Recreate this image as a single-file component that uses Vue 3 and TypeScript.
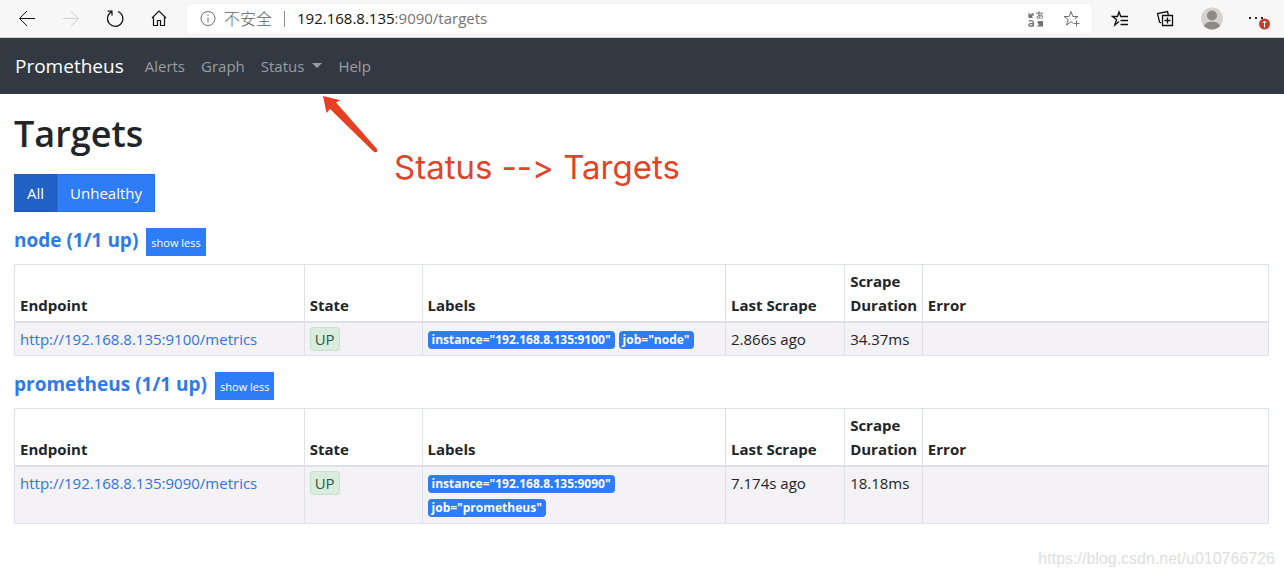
<script setup lang="ts">
interface Pool {
  name: string
  endpoint: string
  labels: string[]
  lastScrape: string
  duration: string
}

const navItems: string[] = ['Alerts', 'Graph', 'Status', 'Help']

const pools: Pool[] = [
  {
    name: 'node',
    endpoint: 'http://192.168.8.135:9100/metrics',
    labels: ['instance="192.168.8.135:9100"', 'job="node"'],
    lastScrape: '2.866s ago',
    duration: '34.37ms',
  },
  {
    name: 'prometheus',
    endpoint: 'http://192.168.8.135:9090/metrics',
    labels: ['instance="192.168.8.135:9090"', 'job="prometheus"'],
    lastScrape: '7.174s ago',
    duration: '18.18ms',
  },
]
</script>

<template>
  <div class="window">
    <header class="browser">
      <div class="controls">
        <button class="tool" type="button" aria-label="Back">
          <svg width="20" height="20" viewBox="0 0 20 20"><path d="M18 9.500H3M10 2L2.500 9.500L10 17" /></svg>
        </button>
        <button class="tool off" type="button" aria-label="Forward" disabled>
          <svg width="20" height="20" viewBox="0 0 20 20"><path d="M2 9.500h15M10 2L17.500 9.500L10 17" /></svg>
        </button>
        <button class="tool" type="button" aria-label="Refresh">
          <svg width="20" height="20" viewBox="0 0 20 20"><path d="M13 2.500a7.700 7.700 0 1 1-6.300.3M2.600 2.200H7v4.600" stroke-width="1.200" /></svg>
        </button>
        <button class="tool" type="button" aria-label="Home">
          <svg width="20" height="20" viewBox="0 0 20 20"><path d="M4.500 8.500V16.500H8.500V11.500H11.500V16.500H15.500V8.500M3 9L10 2L17 9" stroke-width="1.200" /></svg>
        </button>
      </div>
      <div class="address">
        <svg class="info" width="16" height="16" viewBox="0 0 16 16"><circle cx="8" cy="7.500" r="7" /><path d="M8 6.500v5M8 3.500v1.500" /></svg>
        <span class="unsafe">不安全</span>
        <span class="bar"></span>
        <div class="url" role="textbox" aria-label="Address" contenteditable="true" spellcheck="false">192.168.8.135<span class="path">:9090/targets</span></div>
        <button class="tool grey" type="button" aria-label="Translate">
          <svg width="18" height="18" viewBox="0 0 18 18">
            <path d="M1.500 8V2.500L3.500 4.500L6.500 2.500V6L4.500 5.500L6 8Z" fill="#707070" stroke="none" />
            <path d="M16 11v5.500H9.500L12 14.500L10 12L12 11Z" fill="#707070" stroke="none" />
            <path d="M9 3.200h7M12 1c-.4 3 0 5 .5 7M15 4.500c-1 3-3.500 4.300-4.600 3.800C9 7.500 11 5 13.500 5.200c3 .2 3 3.300.2 3.800" />
            <path d="M2 11.300c1-1 4.300-1.200 4.300.8V16.500M6.300 13.300c-2 0-4.500 0-4.500 1.700 0 1.700 3 1.900 4.500-.4" stroke-width="1.300" />
          </svg>
        </button>
        <button class="tool grey" type="button" aria-label="Add to favorites">
          <svg width="18" height="18" viewBox="0 0 18 18"><path d="M10 13L8 11.700L3.500 15L5.200 9.500L1 6.500H6.200L8 1.500L9.800 6.500H15L11.500 9M13.500 10.500v6M10.500 13.500h6" /></svg>
        </button>
      </div>
      <div class="side">
        <button class="tool" type="button" aria-label="Favorites">
          <svg width="18" height="18" viewBox="0 0 18 18"><path d="M8 11.500L3.800 15L5.500 9.500L1.500 6.500H6.500L8 2L9.800 6.500H17M9.500 10.500H17M9.500 14.500H17" stroke-width="1.300" /></svg>
        </button>
        <button class="tool" type="button" aria-label="Collections">
          <svg width="18" height="18" viewBox="0 0 18 18"><path d="M5.500 5.500H15.500V15.500H5.500ZM10.500 7.500v6M7.500 10.500h6M4 13L2.500 12L.5 3.500L10.500 1.500L11.300 5" stroke-width="1.300" /></svg>
        </button>
        <button class="tool" type="button" aria-label="Profile">
          <svg width="24" height="24" viewBox="0 0 24 24">
            <circle cx="12" cy="11.500" r="11" fill="#d5d2cf" stroke="none" />
            <circle cx="12" cy="8.500" r="5" fill="#8c8987" stroke="none" />
            <path d="M4 19.100c1.500-5.800 14.500-5.800 16 0a11 11 0 0 1-16 0z" fill="#8c8987" stroke="none" />
          </svg>
        </button>
        <button class="tool" type="button" aria-label="Settings and more">
          <svg width="24" height="24" viewBox="0 0 24 24">
            <path d="M3 10h2v2H3zM9 10h2v2H9zM15 10h2v2h-2z" fill="#222" stroke="none" />
            <circle cx="18.500" cy="17" r="5.500" fill="#c43e2f" stroke="none" />
            <path d="M18.500 20.500v-6.500M16.500 16l2-2 2 2" stroke="#fff" />
          </svg>
        </button>
      </div>
    </header>

    <nav class="navbar">
      <a class="brand" href="#">Prometheus</a>
      <a v-for="item in navItems" :key="item" class="link" href="#">{{ item }}<span v-if="item === 'Status'" class="caret"></span></a>
      <div class="note">
        <svg width="60" height="62" viewBox="0 0 60 62"><path d="M3 2L20.500 6.200L16 8.500L57 55Q58 59 54 58L10 15L6.500 19Z" fill="#e63f22" stroke="none" /></svg>
        <span class="note-text">Status --&gt; Targets</span>
      </div>
    </nav>

    <main class="content">
      <h1>Targets</h1>
      <div class="group">
        <button class="btn active" type="button">All</button>
        <button class="btn" type="button">Unhealthy</button>
      </div>

      <section v-for="pool in pools" :key="pool.name" class="pool">
        <div class="pool-head">
          <h3><a href="#">{{ pool.name }} (1/1 up)</a></h3>
          <button class="less" type="button">show less</button>
        </div>
        <table>
          <colgroup>
            <col class="c-endpoint" /><col class="c-state" /><col class="c-labels" />
            <col class="c-last" /><col class="c-duration" /><col />
          </colgroup>
          <thead>
            <tr>
              <th>Endpoint</th>
              <th>State</th>
              <th>Labels</th>
              <th>Last Scrape</th>
              <th>Scrape Duration</th>
              <th>Error</th>
            </tr>
          </thead>
          <tbody>
            <tr>
              <td><a href="#">{{ pool.endpoint }}</a></td>
              <td><span class="up">UP</span></td>
              <td>
                <div class="labels"><span v-for="label in pool.labels" :key="label" class="badge">{{ label }}</span></div>
              </td>
              <td>{{ pool.lastScrape }}</td>
              <td>{{ pool.duration }}</td>
              <td></td>
            </tr>
          </tbody>
        </table>
      </section>
    </main>

    <footer class="watermark">https://blog.csdn.net/u010766726</footer>
  </div>
</template>

<style>
body {
  margin: 0;
  background: #fff;
}
</style>

<style scoped>
.window {
  display: flex;
  flex-direction: column;
  min-height: 100vh;
  box-sizing: border-box;
  font: 15px/24px "Open Sans", "Noto Sans", "Noto Sans CJK SC", sans-serif;
  color: #212529;
}
a {
  color: #2f74e0;
  text-decoration: none;
}
button {
  font: inherit;
  border: 0;
  cursor: pointer;
}
svg {
  display: block;
  fill: none;
  stroke: #111;
}
.browser {
  display: flex;
  align-items: center;
  height: 37px;
  background: #f7f7f7;
  border-bottom: 1px solid #cfcfcf;
}
.controls,
.side {
  display: flex;
  align-items: center;
}
.controls {
  gap: 20px;
  padding: 0 16px 0 15px;
}
.side {
  gap: 22px;
  padding: 0 14px 0 16px;
}
.tool {
  display: flex;
  justify-content: center;
  align-items: center;
  width: 24px;
  height: 24px;
  padding: 0;
  background: none;
}
.off svg {
  stroke: #d2d2d2;
}
.grey svg {
  stroke: #707070;
}
.address {
  display: flex;
  flex: 1;
  align-items: center;
  height: 30px;
  padding: 0 8px 0 13px;
  box-sizing: border-box;
  background: #fff;
  border-radius: 4px;
  box-shadow: 0 0 2px #e4e4e4;
}
.address .info {
  stroke: #6b6b6b;
}
.unsafe {
  margin-left: 8px;
  padding-bottom: 2px;
  font-family: "Noto Sans CJK SC", sans-serif;
  font-size: 16px;
  font-weight: 300;
  color: #5f5f5f;
}
.bar {
  width: 1px;
  height: 16px;
  margin: 0 12px;
  background: #8a8a8a;
}
.url {
  flex: 1;
  padding-bottom: 2px;
  color: #111;
  outline: none;
}
.path {
  color: #737373;
}
.address .tool + .tool {
  margin-left: 12px;
}
.navbar {
  position: relative;
  display: flex;
  align-items: center;
  gap: 16px;
  height: 56px;
  padding: 0 15px;
  background: #333943;
}
.brand {
  margin-right: 5px;
  font-size: 19px;
  color: #fff;
}
.link {
  color: #999ca1;
}
.caret {
  display: inline-block;
  margin-left: 8px;
  vertical-align: 4px;
  border: 5px solid transparent;
  border-top-color: #999ca1;
  border-bottom: 0;
}
.note {
  position: absolute;
  top: 56px;
  left: 320px;
  display: flex;
  align-items: flex-end;
  gap: 14px;
}
.note-text {
  height: 34px;
  margin-bottom: -28px;
  font: 33px/34px Inter, "Liberation Sans", sans-serif;
  font-feature-settings: "calt" 0;
  color: #e0442a;
  white-space: nowrap;
}
.content {
  padding: 16px 15px 0 14px;
}
h1 {
  margin: 0 0 16px;
  font-size: 36px;
  font-weight: 600;
  line-height: 48px;
}
.group {
  display: flex;
}
.btn {
  height: 38px;
  padding: 0 12px;
  background: #2e7cf6;
  border: 1px solid #2a73e6;
  color: #fff;
}
.btn.active {
  background: #2160c4;
  border-color: #1f5bb9;
}
.pool {
  margin-top: 16px;
}
.pool-head {
  display: flex;
  gap: 8px;
  margin-bottom: 8px;
}
h3 {
  margin: 0;
  font-size: 19px;
  font-weight: 700;
  line-height: 24px;
}
h3 a {
  color: #2e7ae8;
}
.less {
  height: 28px;
  padding: 1px 5px 0;
  background: #2e7cf6;
  color: #fff;
  font-size: 11px;
}
table {
  width: 100%;
  table-layout: fixed;
  border-collapse: collapse;
}
.c-endpoint {
  width: 23.1%;
}
.c-state {
  width: 9.4%;
}
.c-labels {
  width: 24.2%;
}
.c-last {
  width: 9.5%;
}
.c-duration {
  width: 6.2%;
}
th,
td {
  padding: 4px 5px;
  border: 1px solid #dee2e6;
  text-align: left;
}
th {
  vertical-align: bottom;
  border-bottom-width: 2px;
  font-weight: 700;
}
td {
  vertical-align: top;
  background: #f4f2f7;
}
.up {
  display: inline-block;
  padding: 0 4px;
  border: 1px solid #c3e6cb;
  border-radius: 3px;
  background: #d9ecdd;
  color: #2d5a3b;
  line-height: 22px;
}
.labels {
  display: flex;
  flex-wrap: wrap;
  gap: 6px 4px;
  padding: 4px 0 2px;
}
.badge {
  padding: 0 4px;
  border-radius: 4px;
  background: #2e7cf6;
  color: #fff;
  font-size: 12px;
  font-weight: 700;
  line-height: 18px;
}
.watermark {
  margin-top: auto;
  padding: 0 9px 6px;
  text-align: right;
  font-family: "Liberation Sans", sans-serif;
  font-size: 16px;
  color: #dedede;
}
</style>
